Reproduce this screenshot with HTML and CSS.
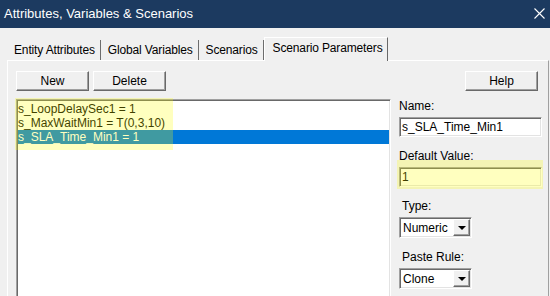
FILE: index.html
```html
<!DOCTYPE html>
<html lang="en">
<head>
    <meta charset="UTF-8">
    <title>Attributes, Variables &amp; Scenarios</title>
    <link rel="stylesheet" href="styles.css">
</head>
<body>
<div class="titlebar">
    <span class="title">Attributes, Variables &amp; Scenarios</span>
    <svg class="close" viewBox="0 0 11 11">
        <path d="M0.5 0.5 L10.5 10.5 M10.5 0.5 L0.5 10.5" stroke="#fff" stroke-width="1.1" fill="none"/>
    </svg>
</div>

<div class="tabs">
    <div class="tab">Entity Attributes</div>
    <div class="tab">Global Variables</div>
    <div class="tab">Scenarios</div>
    <div class="tab active">Scenario Parameters</div>
</div>

<div class="page">
    <div class="toolbar">
        <button class="btn">New</button>
        <button class="btn">Delete</button>
        <button class="btn help">Help</button>
    </div>

    <div class="content">
        <div class="listbox">
            <div class="item">s_LoopDelaySec1 = 1</div>
            <div class="item">s_MaxWaitMin1 = T(0,3,10)</div>
            <div class="item selected">s_SLA_Time_Min1 = 1</div>
            <div class="marker list-marker"></div>
        </div>

        <div class="props">
            <div class="group">
                <div class="label">Name:</div>
                <div class="field">s_SLA_Time_Min1</div>
            </div>
            <div class="group">
                <div class="label">Default Value:</div>
                <div class="field">1</div>
                <div class="marker value-marker"></div>
            </div>
            <div class="group">
                <div class="label indent">Type:</div>
                <div class="combo"><span class="value">Numeric</span><span class="drop"></span></div>
            </div>
            <div class="group">
                <div class="label indent">Paste Rule:</div>
                <div class="combo"><span class="value">Clone</span><span class="drop"></span></div>
            </div>
        </div>
    </div>
</div>
</body>
</html>
```

FILE: styles.css
```css
* {
    box-sizing: border-box;
    margin: 0;
    padding: 0;
}
body {
    font-family: "Liberation Sans", Arial, sans-serif;
    font-size: 12px;
    background-color: #f0f0f0;
    color: #000;
    width: 550px;
    height: 296px;
    overflow: hidden;
}

/* window title */
.titlebar {
    height: 28px;
    background-color: #1c3a60;
    color: #fff;
    display: flex;
    align-items: center;
    padding: 0 5px 2px 4px;
    font-size: 13px;
}
.close {
    margin-left: auto;
    width: 11px;
    height: 11px;
}

/* tab strip */
.tabs {
    display: flex;
    align-items: flex-end;
    height: 23px;
    margin-top: 9px;
    padding-left: 7px;
    letter-spacing: -0.15px;
}
.tab {
    height: 20px;
    line-height: 14px;
    padding: 3px 5px 0 7px;
    border-right: 1px solid #6d6d6d;
    white-space: nowrap;
}
.tab.active {
    position: relative;
    z-index: 1;
    height: 24px;
    margin-bottom: -1px;
    padding: 3px 5px 0 8px;
    background-color: #f0f0f0;
    border-top: 1px solid #fff;
    border-left: 1px solid #fff;
    border-right: 1px solid #696969;
}

/* tab page */
.page {
    height: 240px;
    margin: 0 1px 0 7px;
    padding: 10px 6px 0 8px;
    border-top: 1px solid #fff;
    border-left: 1px solid #fff;
    border-right: 1px solid #a0a0a0;
}
.toolbar {
    display: flex;
    gap: 4px;
    height: 20px;
    margin-bottom: 8px;
}
.btn {
    width: 73px;
    height: 20px;
    font: inherit;
    color: #000;
    background-color: #f0f0f0;
    border: 1px solid;
    border-color: #fff #696969 #696969 #fff;
    box-shadow: inset -1px -1px 0 #a0a0a0;
}
.help {
    margin-left: auto;
    margin-right: 4px;
}

.content {
    display: grid;
    grid-template-columns: 375px 143px;
    column-gap: 8px;
}

/* list of parameters */
.listbox {
    position: relative;
    height: 200px;
    background-color: #fff;
    padding: 2px 1px 0 1px;
    border: 1px solid;
    border-color: #a0a0a0 #fff #fff #a0a0a0;
    box-shadow: inset 1px 1px 0 #696969, inset -1px -1px 0 #e3e3e3;
}
.item {
    height: 14px;
    line-height: 14px;
    white-space: nowrap;
}
.item.selected {
    background-color: #0078d7;
    color: #fff;
}

/* highlighter marks drawn over the screenshot */
.marker {
    position: absolute;
    background-color: rgba(255, 255, 0, 0.25);
}
.list-marker {
    left: -2px;
    top: -2px;
    width: 158px;
    height: 52px;
}
.value-marker {
    left: -2px;
    top: 11px;
    width: 146px;
    height: 29px;
}

/* properties column */
.props {
    display: flex;
    flex-direction: column;
}
.group {
    position: relative;
    margin-bottom: 12px;
}
.label {
    line-height: 14px;
    margin-bottom: 4px;
    white-space: nowrap;
}
.label.indent {
    padding-left: 3px;
}
.field {
    height: 20px;
    line-height: 14px;
    padding: 2px 2px 0 2px;
    background-color: #fff;
    border: 1px solid;
    border-color: #a0a0a0 #fff #fff #a0a0a0;
    box-shadow: inset 1px 1px 0 #696969, inset -1px -1px 0 #e3e3e3;
    white-space: nowrap;
}
.combo {
    display: flex;
    align-items: center;
    width: 73px;
    height: 21px;
    padding: 1px;
    background-color: #fff;
    border: 1px solid;
    border-color: #a0a0a0 #fff #fff #a0a0a0;
    box-shadow: inset 1px 1px 0 #696969, inset -1px -1px 0 #e3e3e3;
}
.combo .value {
    flex: 1;
    padding-left: 2px;
    line-height: 14px;
}
.drop {
    display: flex;
    align-items: center;
    justify-content: center;
    width: 17px;
    height: 17px;
    background-color: #f0f0f0;
    border: 1px solid;
    border-color: #fff #696969 #696969 #fff;
    box-shadow: inset -1px -1px 0 #a0a0a0;
}
.drop::after {
    content: "";
    border-left: 4px solid transparent;
    border-right: 4px solid transparent;
    border-top: 4px solid #000;
}
```
